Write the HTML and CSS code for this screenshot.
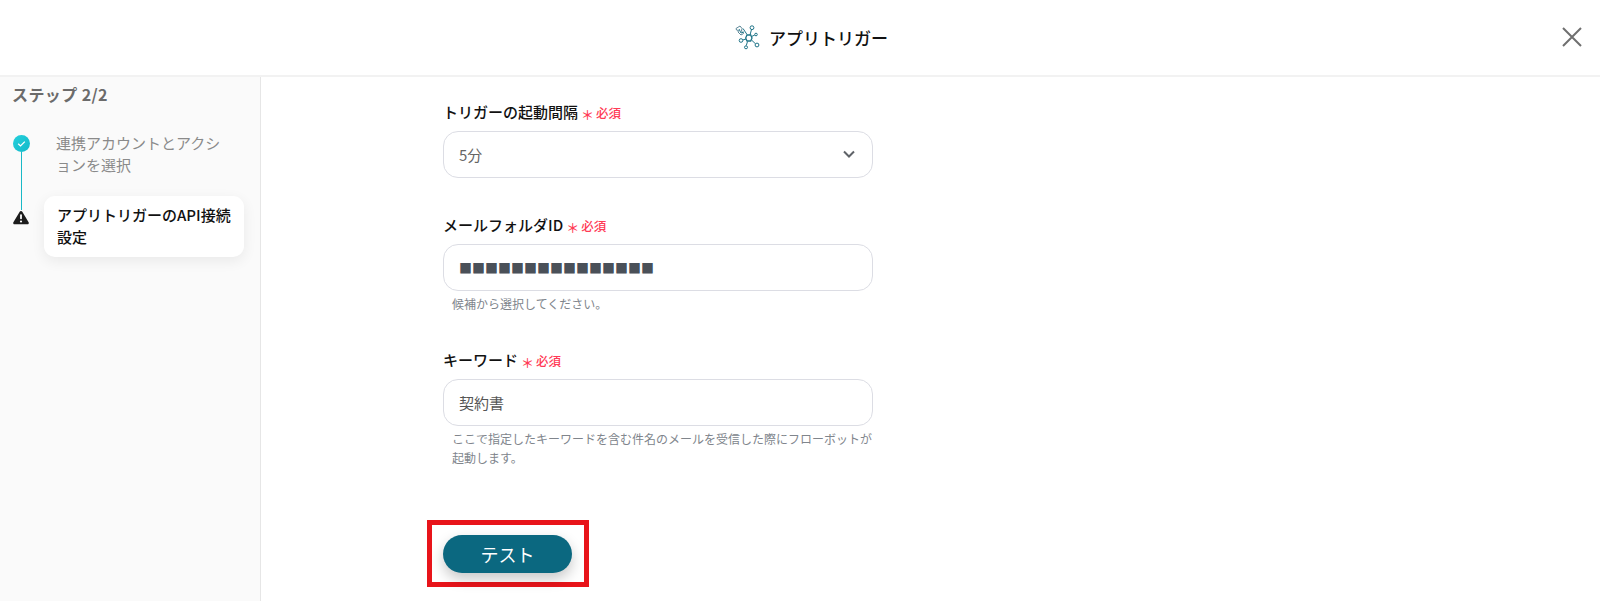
FILE: index.html
```html
<!DOCTYPE html>
<html lang="ja">
<head>
<meta charset="UTF-8">
<meta name="viewport" content="width=device-width, initial-scale=1.0">
<title>アプリトリガー</title>
<link rel="stylesheet" href="styles.css">
</head>
<body>

<header>
  <div class="titre">
    <svg class="logo" width="25" height="25" viewBox="0 0 25 25" fill="none" stroke="#1f7488" stroke-width="1">
      <path d="M1 3.500l4-2.500 2 2.500-.5 2.500 2 2.500-2.500 1.500-2-2-1-1 .5-1.500-2-.5z" stroke="#5b8797"/>
      <path d="M4 4l2 4 3-1M8 3.500l4 6M15 10L16.500 4.500M16.500 11.500L19.800 10M16.500 15L20.500 18.800M12.500 16.500L11.300 20.500M11 14L7.700 15"/>
      <path d="M12 10h3.700l1.300 3-1.300 3h-3.700l-1.300-3z" stroke-width="1.300"/>
      <circle cx="17" cy="2.700" r="1.900" fill="#fff"/>
      <circle cx="21" cy="9.500" r="1.300" fill="#fff"/>
      <circle cx="22" cy="20" r="1.900" fill="#fff"/>
      <circle cx="11" cy="22.300" r="1.500" fill="#fff"/>
      <circle cx="6" cy="15.500" r="1.800" fill="#fff"/>
    </svg>
    <span>アプリトリガー</span>
  </div>
  <svg class="fermer" width="22" height="22" viewBox="0 0 22 22" stroke="#6f6f6f" stroke-width="2" fill="none">
    <path d="M2 2l18 18M20 2L2 20"/>
  </svg>
</header>

<div class="page">
  <aside>
    <div class="etape-titre">ステップ 2/2</div>
    <div class="etapes">
      <div class="etape">
        <div class="marque">
          <svg class="puce" width="17" height="17" viewBox="0 0 17 17">
            <defs>
              <linearGradient id="vert" x1="0" y1="0" x2="1" y2="1">
                <stop offset="0" stop-color="#25d0dc"/>
                <stop offset="1" stop-color="#12b9c9"/>
              </linearGradient>
            </defs>
            <circle cx="8.500" cy="8.500" r="8.500" fill="url(#vert)"/>
            <path d="M5.200 8.700l2.300 2.200 4.300-4.300" stroke="#fff" stroke-width="1.300" fill="none"/>
          </svg>
          <div class="trait"></div>
        </div>
        <div class="etape-texte">連携アカウントとアクションを選択</div>
      </div>
      <div class="etape etape-active">
        <div class="marque">
          <svg class="alerte" width="16" height="15" viewBox="0 0 16 14">
            <path d="M8 0.500c.6 0 1 .3 1.300.8l6.300 10.500c.5.900 0 2-1.100 2H1.500c-1.100 0-1.600-1.100-1.100-2L6.700 1.300C7 .8 7.400 .5 8 .5z" fill="#1c1c1c"/>
            <rect x="7.100" y="3.800" width="1.800" height="5" rx=".8" fill="#fff"/>
            <circle cx="8" cy="11" r="1.100" fill="#fff"/>
          </svg>
        </div>
        <div class="carte">アプリトリガーのAPI接続設定</div>
      </div>
    </div>
  </aside>

  <main>
    <div class="champ champ-1">
      <div class="libelle">トリガーの起動間隔<span class="requis"><i>＊</i>必須</span></div>
      <div class="saisie">
        <span class="valeur-select">5分</span>
        <svg width="14" height="9" viewBox="0 0 14 9" fill="none" stroke="#5f6368" stroke-width="2">
          <path d="M2 1.500l5 5 5-5"/>
        </svg>
      </div>
    </div>

    <div class="champ champ-2">
      <div class="libelle">メールフォルダID<span class="requis"><i>＊</i>必須</span></div>
      <div class="saisie"><span class="masque">■■■■■■■■■■■■■■■</span></div>
      <div class="aide">候補から選択してください。</div>
    </div>

    <div class="champ champ-3">
      <div class="libelle">キーワード<span class="requis"><i>＊</i>必須</span></div>
      <div class="saisie">契約書</div>
      <div class="aide">ここで指定したキーワードを含む件名のメールを受信した際にフローボットが起動します。</div>
    </div>

    <div class="encadre">
      <button>テスト</button>
    </div>
  </main>
</div>

</body>
</html>
```

FILE: styles.css
```css
* { margin: 0; padding: 0; box-sizing: border-box; }

html, body {
  height: 601px;
  overflow: hidden;
}

body {
  font-family: "Noto Sans CJK JP", "Noto Sans", sans-serif;
  background: #fff;
  color: #111;
}

header {
  height: 77px;
  border-bottom: 2px solid #f2f2f2;
  display: flex;
  align-items: center;
  justify-content: center;
  position: relative;
}

.titre {
  display: flex;
  align-items: center;
  gap: 9px;
  font-size: 17px;
  font-weight: 500;
  margin-left: 23px;
}

.fermer {
  position: absolute;
  top: 26px;
  right: 17px;
}

.page {
  display: flex;
  height: 524px;
}

aside {
  width: 261px;
  background: #fafafa;
  border-right: 1px solid #e6e6e6;
  padding: 5px 0 0 12px;
}

.etape-titre {
  font-size: 16px;
  font-weight: 700;
  color: #6b6b6b;
  line-height: 24px;
  letter-spacing: 0.4px;
}

.etapes {
  margin-top: 25px;
}

.etape {
  display: flex;
}

.etape-active {
  margin-top: -14px;
}

.marque {
  width: 32px;
  flex-shrink: 0;
  padding-left: 1px;
}

.puce { display: block; margin-top: 4px; }

.trait {
  width: 1.500px;
  height: 58px;
  background: #19b9c7;
  margin-left: 7.750px;
}

.alerte { display: block; margin-top: 14px; }

.etape-texte {
  font-size: 15px;
  line-height: 22px;
  color: #8a8a8a;
  width: 172px;
  margin: 1px 0 0 12px;
}

.carte {
  width: 200px;
  height: 61px;
  padding: 8px 13px;
  background: #fff;
  border-radius: 11px;
  box-shadow: 0 4px 14px rgba(0,0,0,0.07);
  font-size: 15px;
  font-weight: 500;
  line-height: 22px;
  color: #111;
}

main {
  padding-left: 182px;
  flex: 1;
}

.champ { width: 430px; }

.champ-1 { margin-top: 23px; }
.champ-2 { margin-top: 35px; }
.champ-3 { margin-top: 35px; }

.libelle {
  font-size: 15px;
  font-weight: 500;
  line-height: 24px;
  height: 31px;
}

.requis {
  font-size: 12.500px;
  font-weight: 500;
  color: #ff3b56;
  margin-left: 3px;
}

.requis i {
  font-style: normal;
  font-size: 13px;
  line-height: 1;
  margin-right: 2px;
  vertical-align: -2px;
}

.saisie {
  height: 47px;
  border: 1px solid #dcdde4;
  border-radius: 15px;
  padding: 0 15px;
  display: flex;
  align-items: center;
  justify-content: space-between;
  font-size: 15px;
  color: #555;
  background: #fff;
}

.valeur-select { color: #666; }

.saisie svg { margin-right: 1px; }

.masque {
  font-size: 13px;
  color: #4a5058;
}

.aide {
  font-size: 12px;
  line-height: 19px;
  color: #80858c;
  padding: 3px 0 0 9px;
}

.encadre {
  width: 162px;
  height: 67px;
  margin: 53px 0 0 -16px;
  border: 5px solid #e8141a;
  padding: 10px 0 0 11px;
}

button {
  width: 129px;
  height: 38px;
  border: none;
  border-radius: 19px;
  background: #0b6880;
  color: #fff;
  font-family: inherit;
  font-size: 18px;
  box-shadow: 0 6px 14px rgba(0,0,0,0.22);
}
```
